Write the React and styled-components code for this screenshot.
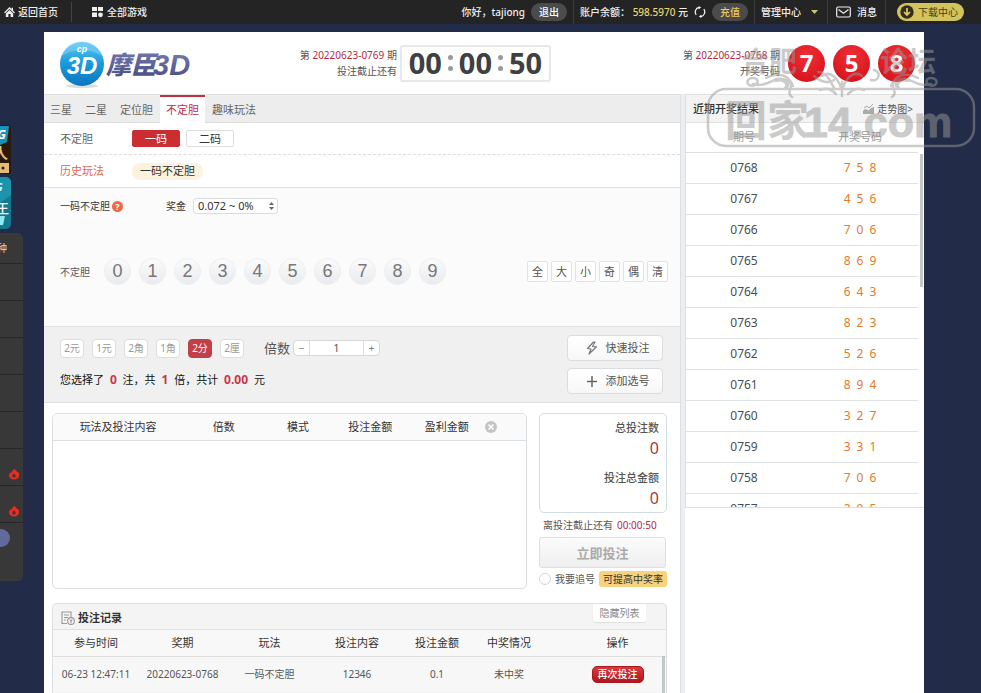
import React, { useState } from "react";
import styled, { createGlobalStyle } from "styled-components";

const GlobalStyle = createGlobalStyle`
  * {
    box-sizing: border-box;
  }

  body {
    margin: 0;
    background: #222b47;
    font-family: "Noto Sans", "Noto Sans CJK SC", sans-serif;
    font-size: 11px;
    line-height: 16px;
    color: #555;
  }

  button,
  input,
  select {
    font: inherit;
    color: inherit;
    margin: 0;
    padding: 0;
  }

  button {
    cursor: pointer;
  }

  a {
    color: inherit;
    text-decoration: none;
  }

  table {
    width: 100%;
    table-layout: fixed;
    border-collapse: collapse;
  }
`;

const Page = styled.div`
  position: relative;
  display: flex;
  flex-direction: column;
  min-height: 100vh;
  overflow: hidden;
`;

/* top bar */

const TopBar = styled.nav`
  display: flex;
  height: 24px;
  padding: 0 17px 0 4px;
  align-items: center;
  background: #242424;
  color: #eee;
  font-size: 10px;
  white-space: nowrap;
`;

const TopLink = styled.a`
  display: flex;
  align-items: center;
  gap: 3px;
  height: 20px;
  padding-right: 13px;
  font-weight: 500;

  & + & {
    padding-left: 20px;
    border-left: 1px solid #444;
  }
`;

const TopGroup = styled.div`
  display: flex;
  align-items: center;
  gap: 6px;
  height: 24px;
  padding: 0 ${({ $pad }) => $pad || 6}px;
  border-right: 1px solid #3c3c3c;
  font-weight: 500;

  &:first-of-type {
    margin-left: auto;
  }
`;

const Balance = styled.span`
  color: #e8d66c;
`;

const Pill = styled.button`
  width: 36px;
  height: 18px;
  border: none;
  border-radius: 9px;
  background: #4b4b4b;
  color: ${({ $gold }) => ($gold ? "#ecc75c" : "#fff")};
  font-weight: 500;
`;

const IconButton = styled.button`
  display: flex;
  border: none;
  background: none;
`;

const Download = styled.a`
  display: flex;
  align-items: center;
  gap: 4px;
  height: 18px;
  margin-left: 11px;
  padding: 0 6px 0 3px;
  border-radius: 9px;
  background: #d3c35c;
  color: #443d18;
`;

/* main frame */

const Main = styled.main`
  flex: 1;
  display: flex;
  flex-direction: column;
  margin: 8px 57px 0 44px;
  background: #fff;
`;

const Header = styled.header`
  display: flex;
  align-items: center;
  height: 62px;
  padding: 0 9px 0 14px;
`;

const Logo = styled.a`
  flex: 1;
  display: flex;
`;

const Issue = styled.p`
  margin: 0 3px 0 0;
  font-size: 10px;
  text-align: right;
  white-space: nowrap;
`;

const Red = styled.span`
  color: #b82a3f;
`;

const Clock = styled.div`
  display: flex;
  align-items: center;
  justify-content: center;
  gap: 6px;
  width: 151px;
  height: 37px;
  margin-right: 132px;
  border: 2px solid #e8e8e8;
  border-radius: 3px;
  color: #404040;
  font-size: 29px;
  line-height: 32px;
  font-weight: 700;
`;

const Dots = styled.span`
  display: flex;
  flex-direction: column;
  gap: 6px;

  &::before,
  &::after {
    content: "";
    width: 5px;
    height: 5px;
    border-radius: 50%;
    background: #999;
  }
`;

const Balls = styled.div`
  display: flex;
  gap: 8px;
  margin-left: 5px;
`;

const Ball = styled.span`
  width: 37px;
  height: 37px;
  border-radius: 50%;
  background: radial-gradient(circle at 50% 30%, #ee2f36, #d9161e 75%);
  color: #fff;
  font-size: 24px;
  line-height: 35px;
  font-weight: 700;
  text-align: center;
`;

const Body = styled.div`
  flex: 1;
  display: flex;
  background: #fff;
`;

const Play = styled.section`
  flex: 1;
  min-width: 0;
  border-right: 1px solid #dcdfe3;
`;

const Tabs = styled.div`
  display: flex;
  gap: 1px;
  height: 29px;
  border-top: 1px solid #e0e0e0;
  border-bottom: 1px solid #ddd;
  background: #ededed;
`;

const Tab = styled.button`
  height: 28px;
  padding: 0 6px;
  border: none;
  border-top: 2px solid ${({ $active }) => ($active ? "#c0303f" : "transparent")};
  background: ${({ $active }) => ($active ? "#fff" : "none")};
  color: ${({ $active }) => ($active ? "#c0303f" : "#666")};
`;

const OptionRow = styled.div`
  display: flex;
  align-items: center;
  gap: 6px;
  height: ${({ $last }) => ($last ? 33 : 32)}px;
  padding-left: 16px;
  border-bottom: 1px ${({ $last }) => ($last ? "solid #dde0e2" : "dashed #ddd")};
`;

const OptionLabel = styled.span`
  width: 66px;
  color: ${({ $accent }) => ($accent ? "#e2674f" : "#666")};
`;

const Option = styled.button`
  width: 48px;
  height: 17px;
  border: 1px solid ${({ $active }) => ($active ? "#cb2d31" : "#ddd")};
  border-radius: 2px;
  background: ${({ $active }) => ($active ? "#cb2d31" : "#fff")};
  color: ${({ $active }) => ($active ? "#fff" : "#333")};
  line-height: 15px;
`;

const HistoryTag = styled.button`
  height: 17px;
  padding: 0 8px;
  border: none;
  border-radius: 8px;
  background: #fdf2dd;
  color: #333;
`;

const Picker = styled.div`
  height: 139px;
  padding: 10px 12px 0 16px;
  border-bottom: 1px solid #e0e2e4;
  background: #fbfbfb;
`;

const PickerHead = styled.div`
  display: flex;
  align-items: center;
  height: 16px;
  color: #333;
  font-size: 10px;
`;

const Help = styled.button`
  width: 11px;
  height: 11px;
  margin: 0 43px 0 2px;
  border: none;
  border-radius: 50%;
  background: #ec6848;
  color: #fff;
  font-size: 9px;
  line-height: 11px;
  font-weight: 700;
`;

const BonusLabel = styled.label`
  display: flex;
  align-items: center;
  gap: 7px;
`;

const SelectWrap = styled.span`
  position: relative;
  display: flex;

  svg {
    position: absolute;
    right: 3px;
    top: 3px;
    pointer-events: none;
  }
`;

const Select = styled.select`
  width: 85px;
  height: 16px;
  padding: 0 4px;
  appearance: none;
  border: 1px solid #d8dcdf;
  border-radius: 3px;
  background: #fff;
  font-size: 11px;
  line-height: 14px;
`;

const NumberRow = styled.div`
  display: flex;
  align-items: center;
  gap: 8px;
  margin-top: 44px;
  font-size: 10px;
`;

const NumberLabel = styled.span`
  width: 36px;
`;

const NumberBall = styled.button`
  width: 27px;
  height: 27px;
  border: 1px solid #eceef0;
  border-radius: 50%;
  background: linear-gradient(#fbfbfc, #e9ebee);
  color: #777;
  font-family: "Liberation Sans", Arial, sans-serif;
  font-size: 18px;
  line-height: 25px;
`;

const QuickPicks = styled.div`
  display: flex;
  gap: 3px;
  margin-left: auto;
`;

const QuickPick = styled.button`
  width: 21px;
  height: 21px;
  border: 1px solid #dde3e6;
  border-radius: 2px;
  background: #fff;
  font-size: 11px;
`;

const Stake = styled.div`
  display: flex;
  justify-content: space-between;
  height: 76px;
  padding: 8px 17px 0 16px;
  border-bottom: 1px solid #dedede;
  background: #f0f0f0;
`;

const StakeRow = styled.div`
  display: flex;
  align-items: center;
  gap: 8px;
  height: 26px;
`;

const Unit = styled.button`
  width: 24px;
  height: 19px;
  border: 1px solid ${({ $active }) => ($active ? "#c33f48" : "#ddd")};
  border-radius: 4px;
  background: ${({ $active }) => ($active ? "#c33f48" : "#fff")};
  color: ${({ $active }) => ($active ? "#fff" : "#999")};
  font-size: 10px;
  line-height: 17px;
`;

const TimesLabel = styled.label`
  margin-left: 12px;
  font-size: 13px;
`;

const Stepper = styled.div`
  display: flex;
  width: 87px;
  height: 16px;
  margin-left: -5px;
  border: 1px solid #d8d8d8;
  border-radius: 4px;
  background: #fff;

  button {
    width: 15px;
    border: none;
    background: none;
    color: #777;
    font-size: 10px;
    line-height: 12px;
  }

  input {
    flex: 1;
    min-width: 0;
    border: solid #ddd;
    border-width: 0 1px;
    background: none;
    text-align: center;
    outline: none;
  }
`;

const Summary = styled.p`
  margin: 11px 0 0;
  color: #111;

  strong {
    margin: 0 3px;
    color: #c93549;
    font-size: 12px;
  }
`;

const StakeActions = styled.div`
  display: flex;
  flex-direction: column;
  gap: 7px;
`;

const Action = styled.button`
  display: flex;
  align-items: center;
  justify-content: center;
  gap: 8px;
  width: 96px;
  height: 26px;
  padding-left: 5px;
  border: 1px solid #d9dde0;
  border-radius: 4px;
  background: linear-gradient(#fff, #f7f7f7);
`;

const Slip = styled.div`
  display: flex;
  gap: 12px;
  padding: 10px 13px 14px 8px;
`;

const SlipList = styled.div`
  flex: 1;
  height: 176px;
  border: 1px solid #dbdfe2;
  border-radius: 5px;
  overflow: hidden;
`;

const SlipHead = styled.th`
  width: ${({ $width }) => $width}px;
  height: 26px;
  padding: 0;
  border-bottom: 1px solid #dde0e3;
  background: #fafafa;
  color: #333;
  font-weight: 400;
  text-align: ${({ $left }) => ($left ? "left" : "center")};
`;

const SlipSide = styled.div`
  width: 128px;
`;

const Totals = styled.dl`
  height: 100px;
  margin: 0;
  padding: 5px 7px;
  border: 1px solid #d3dde4;
  border-radius: 5px;
  text-align: right;

  dt {
    height: 20px;
    line-height: 18px;
    font-weight: 500;
  }

  dd {
    height: 30px;
    margin: 0;
    color: #a43b42;
    font-size: 16px;
    line-height: 18px;
  }
`;

const Deadline = styled.p`
  display: flex;
  gap: 4px;
  margin: 4px 0 4px 4px;
  font-size: 10px;
`;

const Submit = styled.button`
  width: 127px;
  height: 31px;
  border: 1px solid #dde0e2;
  border-radius: 3px;
  background: linear-gradient(#fbfbfb, #efefef);
  color: #aaa;
  font-size: 13px;
  font-weight: 700;
`;

const Chase = styled.label`
  display: flex;
  align-items: center;
  gap: 4px;
  margin-top: 3px;
  font-size: 10px;

  input {
    width: 12px;
    height: 12px;
    appearance: none;
    border: 1px solid #d5d5d5;
    border-radius: 50%;
    background: #fff;
  }

  em {
    padding: 0 4px;
    border-radius: 3px;
    background: #f7d17c;
    color: #333;
    font-style: normal;
  }
`;

const Records = styled.section`
  position: relative;
  height: 90px;
  margin: 0 13px 0 8px;
  border: 1px solid #dcdfe2;
  border-bottom: none;
  border-radius: 5px 5px 0 0;
  background: #f4f4f4;
`;

const RecordsHead = styled.div`
  display: flex;
  align-items: center;
  justify-content: space-between;
  height: 26px;
  padding: 0 20px 0 8px;
  border-bottom: 1px solid #e0e0e0;

  h2 {
    display: flex;
    align-items: center;
    gap: 3px;
    margin: 0;
    padding-top: 3px;
    color: #333;
    font-size: 11px;
    font-weight: 700;
  }
`;

const HideButton = styled.button`
  align-self: flex-start;
  height: 18px;
  width: 53px;
  border: none;
  border-radius: 0 0 2px 2px;
  background: #fff;
  box-shadow: 0 1px 1px #ddd;
  color: #888;
  font-size: 10px;
`;

const RecordTh = styled.th`
  width: ${({ $width }) => $width}px;
  height: 26px;
  padding: 0 0 0 ${({ $indent }) => $indent || 0}px;
  border-bottom: 1px solid #dedede;
  background: #f8f8f8;
  color: #333;
  font-weight: 400;
`;

const RecordTd = styled.td`
  height: 36px;
  padding: 0 0 0 ${({ $indent }) => $indent || 0}px;
  background: #f7f7f7;
  font-size: 10px;
  text-align: center;
  white-space: nowrap;
`;

const Again = styled.button`
  width: 52px;
  height: 17px;
  border: 1px solid #a81a20;
  border-radius: 5px;
  background: linear-gradient(#dd373c, #b3151c);
  color: #fff;
  font-weight: 500;
  line-height: 14px;
`;

const Thumb = styled.span`
  position: absolute;
  top: ${({ $top }) => $top}px;
  right: ${({ $right }) => $right}px;
  width: 3px;
  height: ${({ $height }) => $height}px;
  background: #c4c7c8;
`;

/* results column */

const Results = styled.aside`
  width: 243px;
  border-left: 4px solid #eceef0;
`;

const ResultsBox = styled.div`
  position: relative;
  height: 414px;
  border-left: 1px solid #dcdfe2;
  border-bottom: 1px solid #dcdfe2;
  border-top: 1px solid #e0e0e0;
  overflow: hidden;
`;

const ResultsList = styled.div`
  padding-right: 6px;
`;

const ResultsHead = styled.div`
  display: flex;
  align-items: center;
  justify-content: space-between;
  height: 28px;
  padding: 0 11px 0 7px;
  border-bottom: 1px solid #e0e0e0;
  background: #f3f3f3;

  h2 {
    margin: 0;
    color: #333;
    font-size: 11px;
    font-weight: 500;
  }

  a {
    display: flex;
    align-items: center;
    gap: 3px;
    font-size: 10px;
  }
`;

const ResultTh = styled.th`
  height: 29px;
  padding: 0;
  border-bottom: 1px solid #dee1e4;
  color: #999;
  font-weight: 400;
`;

const ResultRow = styled.tr`
  height: 31px;

  td {
    padding: 0;
    border-bottom: 1px solid #dfe3e6;
    color: #454f59;
    font-size: 12px;
    text-align: center;
  }
`;

const Drawn = styled.span`
  display: flex;
  justify-content: center;
  gap: 6px;
  color: #e67a28;
`;

/* floating parts */

const SideDock = styled.aside`
  position: absolute;
  left: 0;
  top: 125px;
  width: 23px;
  color: #ddd;
`;

const Promo = styled.a`
  display: block;
  height: ${({ $height }) => $height}px;
  margin-bottom: 3px;
`;

const DockMenu = styled.div`
  height: 348px;
  margin-top: 4px;
  border-radius: 0 5px 5px 0;
  background: #383838;
  overflow: hidden;
`;

const DockItem = styled.a`
  display: flex;
  align-items: center;
  justify-content: ${({ $title }) => ($title ? "flex-start" : "flex-end")};
  height: ${({ $title }) => ($title ? 31 : 37)}px;
  padding-right: 3px;
  padding-top: ${({ $title }) => ($title ? 0 : 14)}px;
  border-bottom: 1px solid #272727;
  font-size: 10px;

  span {
    margin-left: -3px;
  }
`;

const DockDot = styled.span`
  display: block;
  width: 10px;
  height: 18px;
  margin-top: 6px;
  border-radius: 0 9px 9px 0;
  background: #626a9c;
`;

const Stamp = styled.svg`
  position: absolute;
  top: 42px;
  right: 5px;
  pointer-events: none;
`;

const LogoArt = () => (
  <svg width="136" height="50" viewBox="0 0 136 50" role="img" aria-label="摩臣3D">
    <defs>
      <linearGradient id="globe" x1="0" y1="0" x2="0" y2="1">
        <stop offset="0" stopColor="#5cc4f0" />
        <stop offset="0.5" stopColor="#1899dc" />
        <stop offset="1" stopColor="#0b76bd" />
      </linearGradient>
      <linearGradient id="word" x1="0" y1="0" x2="0" y2="1">
        <stop offset="0" stopColor="#7b7fb2" />
        <stop offset="1" stopColor="#454b82" />
      </linearGradient>
    </defs>
    <ellipse cx="24" cy="48" rx="16" ry="2" fill="#ddd" />
    <circle cx="24" cy="26" r="22" fill="url(#globe)" />
    <path d="M4 18C9 -1 38 -2 44 18C32 10 15 10 4 18Z" fill="#8bdafa" opacity="0.45" />
    <g
      fill="#fff"
      textAnchor="middle"
      fontFamily="Liberation Sans, sans-serif"
      fontWeight="700"
      fontStyle="italic"
    >
      <text x="24" y="14" fontSize="9">
        cp
      </text>
      <text x="24" y="36" fontSize="24">
        3D
      </text>
    </g>
    <g fill="url(#word)" fontWeight="900" fontStyle="italic">
      <text x="48" y="36" fontFamily="Noto Sans CJK SC, sans-serif" fontSize="25">
        摩臣
      </text>
      <text x="95" y="37" fontFamily="Liberation Sans, sans-serif" fontSize="29">
        3D
      </text>
    </g>
  </svg>
);

const HomeIcon = () => (
  <svg width="11" height="12" viewBox="0 0 11 12" fill="#eee">
    <path d="M5.5 1L0 6.5L1 7.3L5.5 3L10 7.3L11 6.5L9 4.4V1.7H7.5V3Z" />
    <path d="M1.8 7.5L5.5 4L9.2 7.5V11H6.6V8H4.4V11H1.8Z" />
  </svg>
);

const GridIcon = () => (
  <svg width="12" height="12" viewBox="0 0 12 12" fill="#eee">
    <path d="M0 1H5V5H0ZM6 1H11V5H6ZM0 6.5H5V11H0Z" />
    <circle cx="8.5" cy="8.8" r="2.4" />
  </svg>
);

const RefreshIcon = () => (
  <svg width="12" height="12" viewBox="0 0 12 12" fill="none" stroke="#eee" strokeWidth="1.3">
    <path d="M2.2 8.8A4.6 4.6 0 0 1 5 1.5M7 10.5A4.6 4.6 0 0 0 9.8 3.2" />
    <path d="M4.7 0L7.2 1.6L4.7 3.2ZM7.3 8.8L4.8 10.4L7.3 12Z" fill="#eee" stroke="none" />
  </svg>
);

const MailIcon = () => (
  <svg width="15" height="12" viewBox="0 0 15 12" fill="none" stroke="#eee" strokeWidth="1.2">
    <rect x="0.7" y="1" width="13.6" height="10" rx="1.5" />
    <path d="M2.5 3.5L7.5 7.3L12.5 3.5" />
  </svg>
);

const DownloadIcon = () => (
  <svg width="14" height="14" viewBox="0 0 14 14">
    <circle cx="7" cy="7" r="6.7" fill="#332f1c" />
    <path d="M7 3V10M4 7L7 10L10 7" fill="none" stroke="#dccd68" strokeWidth="1.7" />
  </svg>
);

const BoltIcon = () => (
  <svg width="12" height="14" viewBox="0 0 12 14" fill="none" stroke="#777" strokeWidth="1.2">
    <path d="M7.5 1L1.5 7.5L5 8L3 13L10.5 5.8L6.5 5.5L9 1Z" strokeLinejoin="round" />
  </svg>
);

const PlusIcon = () => (
  <svg width="12" height="12" viewBox="0 0 12 12" stroke="#666" strokeWidth="1.5">
    <path d="M6 1V12M1 6.5H11" />
  </svg>
);

const ClearIcon = () => (
  <svg width="12" height="12" viewBox="0 0 12 12">
    <circle cx="6" cy="6" r="6" fill="#c4c4c4" />
    <path d="M3.5 3.5L8.5 8.5M8.5 3.5L3.5 8.5" stroke="#fff" strokeWidth="1.6" />
  </svg>
);

const RecordIcon = () => (
  <svg width="14" height="14" viewBox="0 0 14 14" fill="none" stroke="#999" strokeWidth="1.1">
    <path d="M6 12.5H1V1H10V6M3 4H8M3 6.5H7M3 9H5" />
    <circle cx="10" cy="10" r="3.4" />
    <path d="M8.7 8.5L10 10L11.3 8.5M10 10V12" />
  </svg>
);

const TrendIcon = () => (
  <svg width="11" height="10" viewBox="0 0 11 10" fill="#aaa">
    <path d="M0 7L2 5V10H0ZM2 5L5 6V10H2ZM5 7L8 4V10H5ZM8 4L11 3V10H8Z" />
    <path d="M1 4L4 2L6 4L10 0" fill="none" stroke="#aaa" />
  </svg>
);

const FlameIcon = () => (
  <svg width="12" height="12" viewBox="0 0 12 12">
    <path
      d="M6 0.5C7 2 9 2.6 9.2 4.3L10 3.7C13 8 9.7 11.5 6 11.5C2 11.5 -0.7 8 2.3 4.5L3.3 5.2C3.2 3.2 5.8 2.5 6 0.5Z"
      fill="#e92d20"
    />
    <path d="M6 5.5C8.7 7.3 7.6 9.6 6 9.6C4.2 9.6 3.4 7.5 6 5.5Z" fill="#383838" />
  </svg>
);

const TABS = ["三星", "二星", "定位胆", "不定胆", "趣味玩法"];
const UNITS = ["2元", "1元", "2角", "1角", "2分", "2厘"];
const DRAWS = [
  ["0768", "758"],
  ["0767", "456"],
  ["0766", "706"],
  ["0765", "869"],
  ["0764", "643"],
  ["0763", "823"],
  ["0762", "526"],
  ["0761", "894"],
  ["0760", "327"],
  ["0759", "331"],
  ["0758", "706"],
  ["0757", "295"],
];

const App = () => {
  const [tab, setTab] = useState("不定胆");
  const [unit, setUnit] = useState("2分");
  const [times, setTimes] = useState(1);

  return (
    <Page>
      <GlobalStyle />
      <TopBar>
        <TopLink href="#">
          <HomeIcon />
          返回首页
        </TopLink>
        <TopLink href="#">
          <GridIcon />
          全部游戏
        </TopLink>
        <TopGroup>
          <span>你好，tajiong</span>
          <Pill>退出</Pill>
        </TopGroup>
        <TopGroup>
          <span>
            账户余额： <Balance>598.5970</Balance> 元
          </span>
          <IconButton aria-label="刷新">
            <RefreshIcon />
          </IconButton>
          <Pill $gold>充值</Pill>
        </TopGroup>
        <TopGroup>
          <a href="#">管理中心</a>
          <svg width="14" height="6" viewBox="0 0 14 6" fill="#d3c35c">
            <path d="M4 1H11L7.5 5Z" />
          </svg>
        </TopGroup>
        <TopGroup $pad={8}>
          <MailIcon />
          <a href="#">消息</a>
        </TopGroup>
        <Download href="#">
          <DownloadIcon />
          下载中心
        </Download>
      </TopBar>

      <Main>
        <Header>
          <Logo href="#">
            <LogoArt />
          </Logo>
          <Issue>
            第 <Red>20220623-0769</Red> 期
            <br />
            投注截止还有
          </Issue>
          <Clock>
            00
            <Dots />
            00
            <Dots />
            50
          </Clock>
          <Issue>
            第 <Red>20220623-0768</Red> 期
            <br />
            开奖号码
          </Issue>
          <Balls>
            <Ball>7</Ball>
            <Ball>5</Ball>
            <Ball>8</Ball>
          </Balls>
        </Header>

        <Body>
          <Play>
            <Tabs>
              {TABS.map((name) => (
                <Tab key={name} $active={name === tab} onClick={() => setTab(name)}>
                  {name}
                </Tab>
              ))}
            </Tabs>
            <OptionRow>
              <OptionLabel>不定胆</OptionLabel>
              <Option $active>一码</Option>
              <Option>二码</Option>
            </OptionRow>
            <OptionRow $last>
              <OptionLabel $accent>历史玩法</OptionLabel>
              <HistoryTag>一码不定胆</HistoryTag>
            </OptionRow>

            <Picker>
              <PickerHead>
                一码不定胆
                <Help>?</Help>
                <BonusLabel>
                  奖金
                  <SelectWrap>
                    <Select>
                      <option>0.072 ~ 0%</option>
                    </Select>
                    <svg width="7" height="10" viewBox="0 0 7 10" fill="#666">
                      <path d="M1 4L3.5 1L6 4ZM1 6L3.5 9L6 6Z" />
                    </svg>
                  </SelectWrap>
                </BonusLabel>
              </PickerHead>
              <NumberRow>
                <NumberLabel>不定胆</NumberLabel>
                {[0, 1, 2, 3, 4, 5, 6, 7, 8, 9].map((n) => (
                  <NumberBall key={n}>{n}</NumberBall>
                ))}
                <QuickPicks>
                  {["全", "大", "小", "奇", "偶", "清"].map((name) => (
                    <QuickPick key={name}>{name}</QuickPick>
                  ))}
                </QuickPicks>
              </NumberRow>
            </Picker>

            <Stake>
              <div>
                <StakeRow>
                  {UNITS.map((name) => (
                    <Unit key={name} $active={name === unit} onClick={() => setUnit(name)}>
                      {name}
                    </Unit>
                  ))}
                  <TimesLabel htmlFor="times">倍数</TimesLabel>
                  <Stepper>
                    <button onClick={() => setTimes(Math.max(1, times - 1))}>−</button>
                    <input
                      id="times"
                      value={times}
                      onChange={(e) => setTimes(Number(e.target.value) || 1)}
                    />
                    <button onClick={() => setTimes(times + 1)}>+</button>
                  </Stepper>
                </StakeRow>
                <Summary>
                  您选择了 <strong>0</strong> 注，共 <strong>{times}</strong> 倍，共计{" "}
                  <strong>0.00</strong> 元
                </Summary>
              </div>
              <StakeActions>
                <Action>
                  <BoltIcon />
                  快速投注
                </Action>
                <Action>
                  <PlusIcon />
                  添加选号
                </Action>
              </StakeActions>
            </Stake>

            <Slip>
              <SlipList>
                <table>
                  <thead>
                    <tr>
                      <SlipHead $width={130}>玩法及投注内容</SlipHead>
                      <SlipHead $width={81}>倍数</SlipHead>
                      <SlipHead $width={67}>模式</SlipHead>
                      <SlipHead $width={77}>投注金额</SlipHead>
                      <SlipHead $width={76}>盈利金额</SlipHead>
                      <SlipHead $width={41} $left>
                        <IconButton aria-label="清空">
                          <ClearIcon />
                        </IconButton>
                      </SlipHead>
                    </tr>
                  </thead>
                </table>
              </SlipList>
              <SlipSide>
                <Totals>
                  <dt>总投注数</dt>
                  <dd>0</dd>
                  <dt>投注总金额</dt>
                  <dd>0</dd>
                </Totals>
                <Deadline>
                  离投注截止还有 <Red>00:00:50</Red>
                </Deadline>
                <Submit>立即投注</Submit>
                <Chase>
                  <input type="radio" name="chase" />
                  我要追号
                  <em>可提高中奖率</em>
                </Chase>
              </SlipSide>
            </Slip>

            <Records>
              <RecordsHead>
                <h2>
                  <RecordIcon />
                  投注记录
                </h2>
                <HideButton>隐藏列表</HideButton>
              </RecordsHead>
              <table>
                <thead>
                  <tr>
                    <RecordTh $width={86}>参与时间</RecordTh>
                    <RecordTh $width={87}>奖期</RecordTh>
                    <RecordTh $width={87}>玩法</RecordTh>
                    <RecordTh $width={88}>投注内容</RecordTh>
                    <RecordTh $width={72}>投注金额</RecordTh>
                    <RecordTh $width={72}>中奖情况</RecordTh>
                    <RecordTh $width={121} $indent={24}>
                      操作
                    </RecordTh>
                  </tr>
                </thead>
                <tbody>
                  <tr>
                    <RecordTd>06-23 12:47:11</RecordTd>
                    <RecordTd>20220623-0768</RecordTd>
                    <RecordTd>一码不定胆</RecordTd>
                    <RecordTd>12346</RecordTd>
                    <RecordTd>0.1</RecordTd>
                    <RecordTd>未中奖</RecordTd>
                    <RecordTd $indent={24}>
                      <Again>再次投注</Again>
                    </RecordTd>
                  </tr>
                </tbody>
              </table>
              <Thumb $top={52} $right={1} $height={37} />
            </Records>
          </Play>

          <Results>
            <ResultsBox>
              <ResultsHead>
                <h2>近期开奖结果</h2>
                <a href="#">
                  <TrendIcon />
                  走势图&gt;
                </a>
              </ResultsHead>
              <ResultsList>
                <table>
                  <thead>
                    <tr>
                      <ResultTh>期号</ResultTh>
                      <ResultTh>开奖号码</ResultTh>
                    </tr>
                  </thead>
                  <tbody>
                    {DRAWS.map(([issue, digits]) => (
                      <ResultRow key={issue}>
                        <td>{issue}</td>
                        <td>
                          <Drawn>
                            {digits.split("").map((d, i) => (
                              <span key={i}>{d}</span>
                            ))}
                          </Drawn>
                        </td>
                      </ResultRow>
                    ))}
                  </tbody>
                </table>
              </ResultsList>
              <Thumb $top={59} $right={1} $height={133} />
            </ResultsBox>
          </Results>
        </Body>
      </Main>

      <SideDock>
        <Promo href="#" $height={49}>
          <svg width="11" height="49" viewBox="0 0 11 49">
            <rect width="11" height="49" rx="2" fill="#2b1a0c" />
            <path d="M0 1H9L7 17L0 20Z" fill="#1593bd" />
            <text x="-3" y="14" fontSize="13" fontWeight="700" fontStyle="italic" fill="#fff">
              G
            </text>
            <text x="-7" y="34" fontSize="15" fontWeight="700" fill="#e8c184">
              人
            </text>
            <path d="M0 38H9V48H0Z" fill="#e6bd76" />
            <circle cx="3" cy="43" r="1.5" fill="#2b1a0c" />
          </svg>
        </Promo>
        <Promo href="#" $height={52}>
          <svg width="11" height="52" viewBox="0 0 11 52">
            <rect x="-6" width="17" height="52" rx="5" fill="#14788f" />
            <path d="M0 0H6Q11 1 11 6V18L0 26Z" fill="#1e93ad" />
            <text x="-5" y="14" fontSize="11" fontWeight="700" fontStyle="italic" fill="#d5f5fa">
              G
            </text>
            <text x="-4" y="36" fontSize="13" fontWeight="500" fill="#fff">
              王
            </text>
            <path d="M0 39H5L3 48H0Z" fill="#8ceaf2" />
          </svg>
        </Promo>
        <DockMenu>
          <DockItem href="#" $title>
            <span>种</span>
          </DockItem>
          {[0, 1, 2, 3, 4, 5, 6].map((n) => (
            <DockItem key={n} href="#">
              {n > 4 && <FlameIcon />}
            </DockItem>
          ))}
          <DockDot />
        </DockMenu>
      </SideDock>

      <Stamp width="270" height="108" viewBox="0 0 270 108" aria-hidden="true">
        <g opacity="0.5" fill="#999" fontWeight="700">
          <g fontFamily="Noto Sans CJK SC, sans-serif" fontSize="28">
            <text x="35" y="30">
              合肥
            </text>
            <text x="174" y="30">
              论坛
            </text>
          </g>
          <text x="19" y="94" fontFamily="Noto Sans CJK SC, sans-serif" fontSize="42">
            回家
          </text>
          <text
            x="98"
            y="95"
            fontFamily="Liberation Sans, sans-serif"
            fontSize="43"
            stroke="#999"
            strokeWidth="1"
          >
            14.com
          </text>
          <rect
            x="2"
            y="47"
            width="266"
            height="57"
            rx="18"
            fill="none"
            stroke="#999"
            strokeWidth="2.5"
          />
          <g fill="none" stroke="#999" strokeWidth="2.5" strokeLinecap="round">
            <path d="M52 42C40 48 38 36 47 36C54 36 52 44 47 42M52 43C65 43 68 34 80 38C92 42 78 50 86 55" />
            <path d="M60 36C72 30 82 32 87 44M108 34C115 40 122 42 128 38M112 30C120 30 124 38 128 46" />
            <path d="M135 46C132 36 124 28 116 34M137 46C140 36 148 28 156 34M136 54V40M130 52C124 46 120 46 114 48M142 52C148 46 152 46 158 48" />
            <path d="M220 42C232 48 234 36 225 36C218 36 220 44 225 42M220 43C207 43 204 34 192 38C180 42 194 50 186 55" />
            <path d="M212 36C200 30 190 32 185 44M165 38C173 40 176 30 168 28" />
            <path d="M70 38C76 36 84 40 80 46M202 38C196 36 188 40 192 46" strokeWidth="4" />
          </g>
        </g>
      </Stamp>
    </Page>
  );
};

export default App;
